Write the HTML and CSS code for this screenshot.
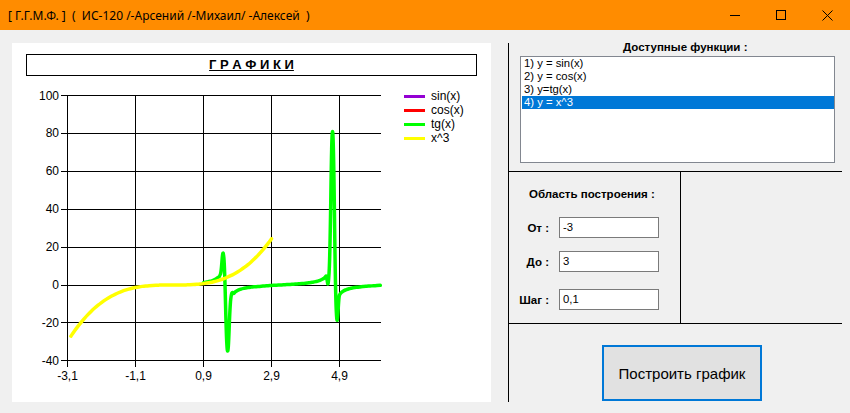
FILE: index.html
```html
<!DOCTYPE html>
<html>
<head>
<meta charset="utf-8">
<title>Графики</title>
<link rel="stylesheet" href="styles.css">
</head>
<body>
<div class="titlebar">
  <div class="title">[ Г.Г.М.Ф. ]  (  ИС-120 /-Арсений /-Михаил/ -Алексей  )</div>
  <div class="controls">
    <div class="ctl"><svg width="10" height="10" viewBox="0 0 10 10"><path d="M0 5.5H10" stroke="#000" stroke-width="1"/></svg></div>
    <div class="ctl"><svg width="10" height="10" viewBox="0 0 10 10"><rect x="0.5" y="0.5" width="9" height="9" fill="none" stroke="#000" stroke-width="1"/></svg></div>
    <div class="ctl"><svg width="11" height="11" viewBox="0 0 11 11"><path d="M0.5 0.5L10.5 10.5M10.5 0.5L0.5 10.5" stroke="#000" stroke-width="1"/></svg></div>
  </div>
</div>
<div class="main">
  <div class="chart">
    <div class="chart-title">Г Р А Ф И К И</div>
    <div class="chart-body">
      <svg class="plot" width="388" height="326" viewBox="0 0 388 326">
        <g class="grid" stroke="#000" stroke-width="1" shape-rendering="crispEdges">
          <line x1="49" y1="19.5" x2="369" y2="19.5"/>
          <line x1="49" y1="57.4" x2="369" y2="57.4"/>
          <line x1="49" y1="95.3" x2="369" y2="95.3"/>
          <line x1="49" y1="133.2" x2="369" y2="133.2"/>
          <line x1="49" y1="171.1" x2="369" y2="171.1"/>
          <line x1="49" y1="209" x2="369" y2="209"/>
          <line x1="49" y1="246.9" x2="369" y2="246.9"/>
          <line x1="49" y1="284.8" x2="369" y2="284.8"/>
          <line x1="55.5" y1="19.5" x2="55.5" y2="291"/>
          <line x1="123.5" y1="19.5" x2="123.5" y2="291"/>
          <line x1="191.5" y1="19.5" x2="191.5" y2="291"/>
          <line x1="259.5" y1="19.5" x2="259.5" y2="291"/>
          <line x1="327.5" y1="19.5" x2="327.5" y2="291"/>
        </g>
        <g class="ylab" text-anchor="end">
          <text x="47" y="23.5">100</text>
          <text x="47" y="61.4">80</text>
          <text x="47" y="99.3">60</text>
          <text x="47" y="137.2">40</text>
          <text x="47" y="175.1">20</text>
          <text x="47" y="213">0</text>
          <text x="47" y="250.9">-20</text>
          <text x="47" y="288.8">-40</text>
        </g>
        <g class="xlab" text-anchor="middle">
          <text x="55.5" y="304">-3,1</text>
          <text x="123.5" y="304">-1,1</text>
          <text x="191.5" y="304">0,9</text>
          <text x="259.5" y="304">2,9</text>
          <text x="327.5" y="304">4,9</text>
        </g>
        <path id="tg" class="series" d="" stroke="#00ff00"/>
        <path id="cube" class="series" d="" stroke="#ffff00"/>
      </svg>
      <ul class="legend">
        <li><span class="swatch sw-sin"></span>sin(x)</li>
        <li><span class="swatch sw-cos"></span>cos(x)</li>
        <li><span class="swatch sw-tg"></span>tg(x)</li>
        <li><span class="swatch sw-cube"></span>x^3</li>
      </ul>
    </div>
  </div>
  <div class="side">
    <div class="funcs">
      <div class="funcs-head">Доступные функции :</div>
      <ul class="listbox">
        <li>1) y = sin(x)</li>
        <li>2) y = cos(x)</li>
        <li>3) y=tg(x)</li>
        <li class="sel">4) y = x^3</li>
      </ul>
    </div>
    <div class="range">
      <div class="range-col">
        <div class="range-head">Область построения :</div>
        <div class="row row1"><span class="lbl">От :</span><div class="field">-3</div></div>
        <div class="row row2"><span class="lbl">До :</span><div class="field">3</div></div>
        <div class="row row3"><span class="lbl">Шаг :</span><div class="field">0,1</div></div>
      </div>
    </div>
    <div class="build">
      <div class="btn">Построить график</div>
    </div>
  </div>
</div>
<script src="script.js"></script>
</body>
</html>
```

FILE: styles.css
```css
* { box-sizing: border-box; }
html, body { margin: 0; padding: 0; }
body {
  width: 850px;
  height: 413px;
  overflow: hidden;
  background: #f0f0f0;
  font-family: "Liberation Sans", Arial, sans-serif;
  color: #000;
}
.titlebar {
  height: 30px;
  background: #ff8c00;
  display: flex;
  align-items: center;
  justify-content: space-between;
}
.title {
  padding-left: 8px;
  font-family: "Noto Sans", "Liberation Sans", sans-serif;
  font-size: 12px;
  white-space: pre;
}
.controls { display: flex; height: 30px; }
.ctl {
  width: 46px;
  height: 30px;
  display: flex;
  align-items: center;
  justify-content: center;
}
.ctl svg { display: block; }
.main {
  display: flex;
  gap: 17px;
  padding: 13px 0 0 12px;
}
.chart {
  width: 479px;
  height: 359px;
  background: #fff;
  padding-top: 11px;
}
.chart-title {
  margin: 0 14px;
  height: 22px;
  border: 1px solid #000;
  text-align: center;
  font-weight: bold;
  font-size: 13px;
  line-height: 20px;
  text-decoration: underline;
}
.chart-body { display: flex; }
.plot { display: block; }
.plot text { font-family: "Liberation Sans", Arial, sans-serif; font-size: 12px; fill: #000; }
.series { fill: none; stroke-width: 3.5; stroke-linejoin: round; stroke-linecap: round; }
.legend {
  list-style: none;
  margin: 0;
  padding: 13px 0 0 4px;
}
.legend li {
  display: flex;
  align-items: center;
  height: 14px;
  font-size: 12px;
}
.swatch { width: 21px; height: 3px; margin-right: 6px; }
.sw-sin { background: #9400d3; }
.sw-cos { background: #ff0000; }
.sw-tg { background: #00ff00; }
.sw-cube { background: #ffff00; }
.side {
  width: 334px;
  height: 359px;
  border-left: 1px solid #000;
  display: flex;
  flex-direction: column;
}
.funcs {
  height: 129px;
  border-bottom: 1px solid #000;
}
.funcs-head {
  margin-top: -3px;
  padding-left: 114px;
  font-weight: bold;
  font-size: 11.5px;
  line-height: 14px;
  height: 14px;
}
.listbox {
  list-style: none;
  margin: 2px 0 0 11px;
  padding: 0;
  width: 315px;
  height: 107px;
  background: #fff;
  border: 1px solid #828790;
  font-size: 11.3px;
}
.listbox li {
  height: 13px;
  line-height: 13px;
  margin-left: 1px;
  padding-left: 2px;
}
.listbox li.sel { background: #0078d7; color: #fff; }
.range {
  height: 152px;
  border-bottom: 1px solid #000;
  display: flex;
}
.range-col {
  width: 172px;
  border-right: 1px solid #000;
  padding-top: 15px;
}
.range-head {
  padding-left: 20px;
  font-weight: bold;
  font-size: 11.5px;
  line-height: 14px;
}
.row { display: flex; align-items: center; height: 21px; }
.row1 { margin-top: 16px; }
.row2 { margin-top: 13px; }
.row3 { margin-top: 17px; }
.lbl {
  width: 40px;
  margin-right: 10px;
  text-align: right;
  font-weight: bold;
  font-size: 11.5px;
}
.field {
  width: 100px;
  height: 21px;
  border: 1px solid #7a7a7a;
  background: #fff;
  font-size: 11.3px;
  line-height: 19px;
  padding-left: 3px;
}
.build {
  flex: 1;
  padding: 21px 0 0 93px;
}
.btn {
  width: 160px;
  height: 56px;
  border: 2px solid #0078d7;
  background: #e1e1e1;
  font-size: 15px;
  display: flex;
  align-items: center;
  justify-content: center;
}
```

FILE: script.js
```js
(function () {
  function X(x) { return 191.5 + (x - 0.9) * 34; }
  function Y(v) { return 209 - v * 1.895; }
  function spline(pts, t) {
    var f = function (n) { return n.toFixed(2); };
    var d = 'M' + f(pts[0][0]) + ',' + f(pts[0][1]);
    for (var i = 0; i < pts.length - 1; i++) {
      var p0 = pts[Math.max(0, i - 1)], p1 = pts[i], p2 = pts[i + 1], p3 = pts[Math.min(pts.length - 1, i + 2)];
      var c1x = p1[0] + t * (p2[0] - p0[0]) / 3, c1y = p1[1] + t * (p2[1] - p0[1]) / 3;
      var c2x = p2[0] - t * (p3[0] - p1[0]) / 3, c2y = p2[1] - t * (p3[1] - p1[1]) / 3;
      d += ' C' + f(c1x) + ',' + f(c1y) + ' ' + f(c2x) + ',' + f(c2y) + ' ' + f(p2[0]) + ',' + f(p2[1]);
    }
    return d;
  }
  var cube = [];
  for (var i = 0; i < 60; i++) {
    var x = -3 + i * 0.1;
    cube.push([X(x), Y(x * x * x)]);
  }
  var tg = [];
  for (var k = 9; k <= 61; k++) {
    var xx = k / 10;
    tg.push([X(xx), Y(Math.tan(xx))]);
  }
  document.getElementById('cube').setAttribute('d', spline(cube, 0.65));
  document.getElementById('tg').setAttribute('d', spline(tg, 0.65));
})();
```
